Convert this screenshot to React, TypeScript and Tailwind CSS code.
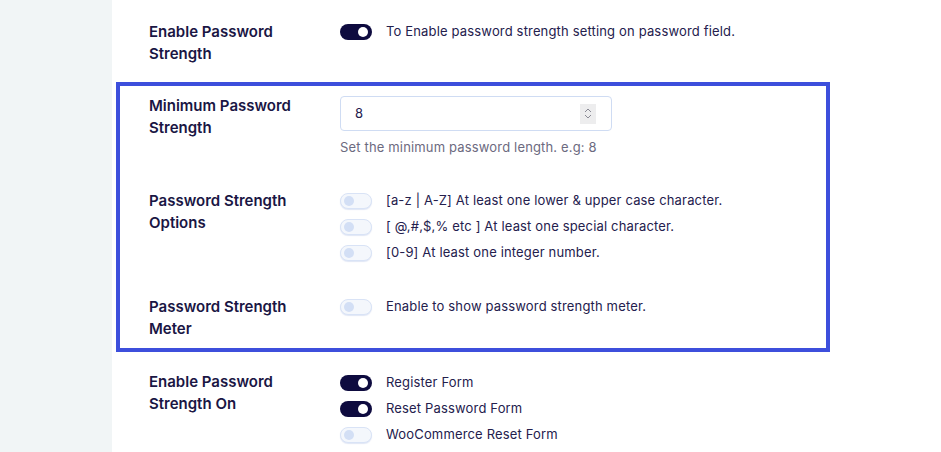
import React from "react";

const font = { fontFamily: "Inter, 'Noto Sans', sans-serif" };

const Toggle: React.FC<{ on?: boolean }> = ({ on }) =>
  on ? (
    <span className="relative inline-block w-[32px] h-[16px] rounded-full bg-[#0e0b3f] shrink-0">
      <span className="absolute right-[4px] top-[3px] w-[10px] h-[10px] rounded-full bg-white" />
    </span>
  ) : (
    <span className="relative inline-block w-[32px] h-[16px] rounded-full bg-[#f4f7fc] border border-[#d9e3f6] shrink-0 shadow-[0_1px_1px_rgba(180,196,230,0.4)]">
      <span className="absolute left-[3px] top-[2px] w-[10px] h-[10px] rounded-full bg-[#d3dff5]" />
    </span>
  );

const Label: React.FC<{ children: React.ReactNode; className?: string }> = ({ children, className }) => (
  <div className={`w-[191px] shrink-0 text-[15px] leading-[22px] font-semibold text-[#1a1644] ${className ?? ""}`}>
    {children}
  </div>
);

const Option: React.FC<{ on?: boolean; text: string; h?: string }> = ({ on, text, h = "h-[26px]" }) => (
  <div className={`flex items-center ${h}`}>
    <Toggle on={on} />
    <span className="ml-[14px] text-[13px] tracking-[0.16px] text-[#24204d]">{text}</span>
  </div>
);

export default function App() {
  return (
    <div className="flex w-[941px] h-[452px] overflow-hidden bg-white" style={font}>
      <aside className="w-[112px] shrink-0 bg-[#f1f5f6]" />
      <main className="flex-1 bg-white">
        <div className="ml-[4px] w-[714px]">
          {/* enable */}
          <div className="flex px-[33px] pt-[21px]">
            <Label>
              Enable Password
              <br />
              Strength
            </Label>
            <Option on text="To Enable password strength setting on password field." h="h-[22px]" />
          </div>

          {/* highlighted box */}
          <div className="mt-[17px] border-4 border-[#3d4fdc] px-[29px] pt-[9px] pb-[8px]">
            <div className="flex">
              <Label>
                Minimum Password
                <br />
                Strength
              </Label>
              <div>
                <div className="mt-[1px] w-[272px] h-[35px] flex items-center justify-between border border-[#cfdcf3] rounded-[4px] pl-[14px] pr-[15px]">
                  <span className="text-[13px] text-[#24204d]">8</span>
                  <span className="w-[16px] h-[20px] bg-[#ededee] flex flex-col items-center justify-center gap-[1px]">
                    <svg width="8" height="5" viewBox="0 0 8 5">
                      <path d="M1 4L4 1L7 4" fill="none" stroke="#8a8a95" strokeWidth="1" />
                    </svg>
                    <svg width="8" height="5" viewBox="0 0 8 5">
                      <path d="M1 1L4 4L7 1" fill="none" stroke="#8a8a95" strokeWidth="1" />
                    </svg>
                  </span>
                </div>
                <div className="mt-[6px] text-[13px] tracking-[0.16px] leading-[20px] text-[#6c6a80]">
                  Set the minimum password length. e.g: 8
                </div>
              </div>
            </div>

            <div className="flex mt-[31px]">
              <Label className="mt-[2px]">
                Password Strength
                <br />
                Options
              </Label>
              <div>
                <Option text="[a-z | A-Z] At least one lower & upper case character." />
                <Option text="[ @,#,$,% etc ] At least one special character." />
                <Option text="[0-9] At least one integer number." />
              </div>
            </div>

            <div className="flex mt-[30px]">
              <Label>
                Password Strength
                <br />
                Meter
              </Label>
              <Option text="Enable to show password strength meter." h="h-[22px]" />
            </div>
          </div>

          {/* enable on */}
          <div className="flex px-[33px] mt-[18px]">
            <Label className="mt-[1px]">
              Enable Password
              <br />
              Strength On
            </Label>
            <div>
              <Option on text="Register Form" />
              <Option on text="Reset Password Form" />
              <Option text="WooCommerce Reset Form" />
            </div>
          </div>
        </div>
      </main>
    </div>
  );
}
